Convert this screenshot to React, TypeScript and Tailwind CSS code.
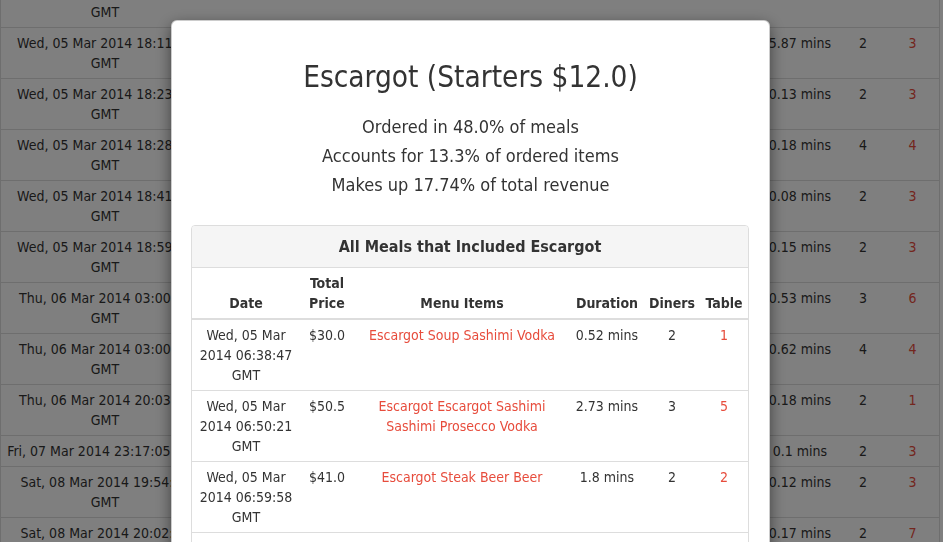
import React from "react";

/** One meal row as shown in the page behind the dialog. */
interface BackgroundRow {
  date: string[];
  price: string;
  items: string;
  duration: string;
  diners: string;
  table: string;
}

/** One meal row inside the dialog's "All Meals" panel. */
interface MealRow {
  date: string;
  price: string;
  items: string;
  duration: string;
  diners: string;
  table: string;
}

const BACKGROUND_ROWS: BackgroundRow[] = [
  { date: ["Wed, 05 Mar 2014 17:58:12", "GMT"], price: "$28.0", items: "Soup Steak Wine", duration: "1.02 mins", diners: "2", table: "2" },
  { date: ["Wed, 05 Mar 2014 18:11:36", "GMT"], price: "$44.5", items: "Escargot Steak Beer", duration: "5.87 mins", diners: "2", table: "3" },
  { date: ["Wed, 05 Mar 2014 18:23:09", "GMT"], price: "$31.0", items: "Soup Sashimi Vodka", duration: "0.13 mins", diners: "2", table: "3" },
  { date: ["Wed, 05 Mar 2014 18:28:51", "GMT"], price: "$62.0", items: "Escargot Steak Steak Wine", duration: "0.18 mins", diners: "4", table: "4" },
  { date: ["Wed, 05 Mar 2014 18:41:27", "GMT"], price: "$24.5", items: "Sashimi Prosecco", duration: "0.08 mins", diners: "2", table: "3" },
  { date: ["Wed, 05 Mar 2014 18:59:40", "GMT"], price: "$36.0", items: "Escargot Soup Beer", duration: "0.15 mins", diners: "2", table: "3" },
  { date: ["Thu, 06 Mar 2014 03:00:14", "GMT"], price: "$51.0", items: "Steak Sashimi Vodka Beer", duration: "0.53 mins", diners: "3", table: "6" },
  { date: ["Thu, 06 Mar 2014 03:00:52", "GMT"], price: "$58.5", items: "Escargot Steak Prosecco", duration: "0.62 mins", diners: "4", table: "4" },
  { date: ["Thu, 06 Mar 2014 20:03:33", "GMT"], price: "$22.0", items: "Soup Wine", duration: "0.18 mins", diners: "2", table: "1" },
  { date: ["Fri, 07 Mar 2014 23:17:05 GMT"], price: "$19.0", items: "Sashimi Beer", duration: "0.1 mins", diners: "2", table: "3" },
  { date: ["Sat, 08 Mar 2014 19:54:18", "GMT"], price: "$40.0", items: "Escargot Sashimi Vodka", duration: "0.12 mins", diners: "2", table: "3" },
  { date: ["Sat, 08 Mar 2014 20:02:45", "GMT"], price: "$33.5", items: "Steak Prosecco", duration: "0.17 mins", diners: "2", table: "7" },
];

const MEALS: MealRow[] = [
  { date: "Wed, 05 Mar 2014 06:38:47 GMT", price: "$30.0", items: "Escargot Soup Sashimi Vodka", duration: "0.52 mins", diners: "2", table: "1" },
  { date: "Wed, 05 Mar 2014 06:50:21 GMT", price: "$50.5", items: "Escargot Escargot Sashimi Sashimi Prosecco Vodka", duration: "2.73 mins", diners: "3", table: "5" },
  { date: "Wed, 05 Mar 2014 06:59:58 GMT", price: "$41.0", items: "Escargot Steak Beer Beer", duration: "1.8 mins", diners: "2", table: "2" },
  { date: "Wed, 05 Mar 2014 07:12:04 GMT", price: "$27.0", items: "Escargot Soup Wine", duration: "0.94 mins", diners: "2", table: "4" },
];

/** The meals list that sits behind the modal overlay. */
function BackgroundTable(): JSX.Element {
  const cell = "border-t border-[#ddd] px-[5px] py-[5px] align-top text-center";
  return (
    <div className="-mt-[24px] w-[940px] border-x border-[#ddd] bg-white">
      <table className="w-full table-fixed border-collapse">
        <colgroup>
          <col className="w-[208px]" />
          <col className="w-[110px]" />
          <col className="w-[441px]" />
          <col className="w-[80px]" />
          <col className="w-[46px]" />
          <col className="w-[53px]" />
        </colgroup>
        <tbody>
          {BACKGROUND_ROWS.map((row, i) => (
            <tr key={i}>
              <td className={cell}>
                {row.date.map((line) => (
                  <div key={line} className="whitespace-nowrap">
                    {line}
                  </div>
                ))}
              </td>
              <td className={cell}>{row.price}</td>
              <td className={`${cell} text-[#e74c3c]`}>{row.items}</td>
              <td className={`${cell} whitespace-nowrap`}>{row.duration}</td>
              <td className={cell}>{row.diners}</td>
              <td className={`${cell} text-[#e74c3c]`}>{row.table}</td>
            </tr>
          ))}
        </tbody>
      </table>
    </div>
  );
}

/** The "All Meals that Included ..." panel inside the dialog. */
function MealsPanel({ dish }: { dish: string }): JSX.Element {
  const th = "border-b-2 border-[#ddd] px-[5px] py-[5px] align-bottom text-center font-bold";
  const td = "border-t border-[#ddd] px-[5px] py-[5px] align-top text-center";
  return (
    <div className="ml-[19px] mt-[26px] w-[558px] rounded-[4px] border border-[#ddd]">
      <div className="rounded-t-[3px] border-b border-[#ddd] bg-[#f5f5f5] py-[10px] text-center text-[16px] font-bold leading-[21px]">
        All Meals that Included {dish}
      </div>
      <table className="w-full table-fixed border-collapse">
        <thead>
          <tr>
            <th className={`${th} w-[108px]`}>Date</th>
            <th className={`${th} w-[54px]`}>Total Price</th>
            <th className={`${th} w-[216px]`}>Menu Items</th>
            <th className={`${th} w-[74px] whitespace-nowrap`}>Duration</th>
            <th className={`${th} w-[56px]`}>Diners</th>
            <th className={`${th} w-[48px]`}>Table</th>
          </tr>
        </thead>
        <tbody>
          {MEALS.map((meal, i) => (
            <tr key={i}>
              <td className={td}>{meal.date}</td>
              <td className={td}>{meal.price}</td>
              <td className={`${td} text-[#e74c3c]`}>{meal.items}</td>
              <td className={`${td} whitespace-nowrap`}>{meal.duration}</td>
              <td className={td}>{meal.diners}</td>
              <td className={`${td} text-[#e74c3c]`}>{meal.table}</td>
            </tr>
          ))}
        </tbody>
      </table>
    </div>
  );
}

export default function App(): JSX.Element {
  return (
    <div className="h-[542px] overflow-hidden bg-white font-[family-name:'DejaVu_Sans_Condensed','Liberation_Sans',sans-serif] text-[14px] leading-[20px] text-[#333]">
      <BackgroundTable />

      {/* modal backdrop */}
      <div className="fixed inset-0 bg-black/50" />

      <div className="fixed left-[171px] top-[20px] h-[560px] w-[599px] rounded-[6px] border border-black/20 bg-white shadow-[0_5px_15px_rgba(0,0,0,0.5)]">
        <h2 className="pt-[40px] text-center text-[29.5px] font-normal leading-[33px]">
          Escargot (Starters $12.0)
        </h2>
        <div className="mt-[18px] text-center text-[18px] leading-[29px]">
          <p>Ordered in 48.0% of meals</p>
          <p>Accounts for 13.3% of ordered items</p>
          <p>Makes up 17.74% of total revenue</p>
        </div>
        <MealsPanel dish="Escargot" />
      </div>
    </div>
  );
}
